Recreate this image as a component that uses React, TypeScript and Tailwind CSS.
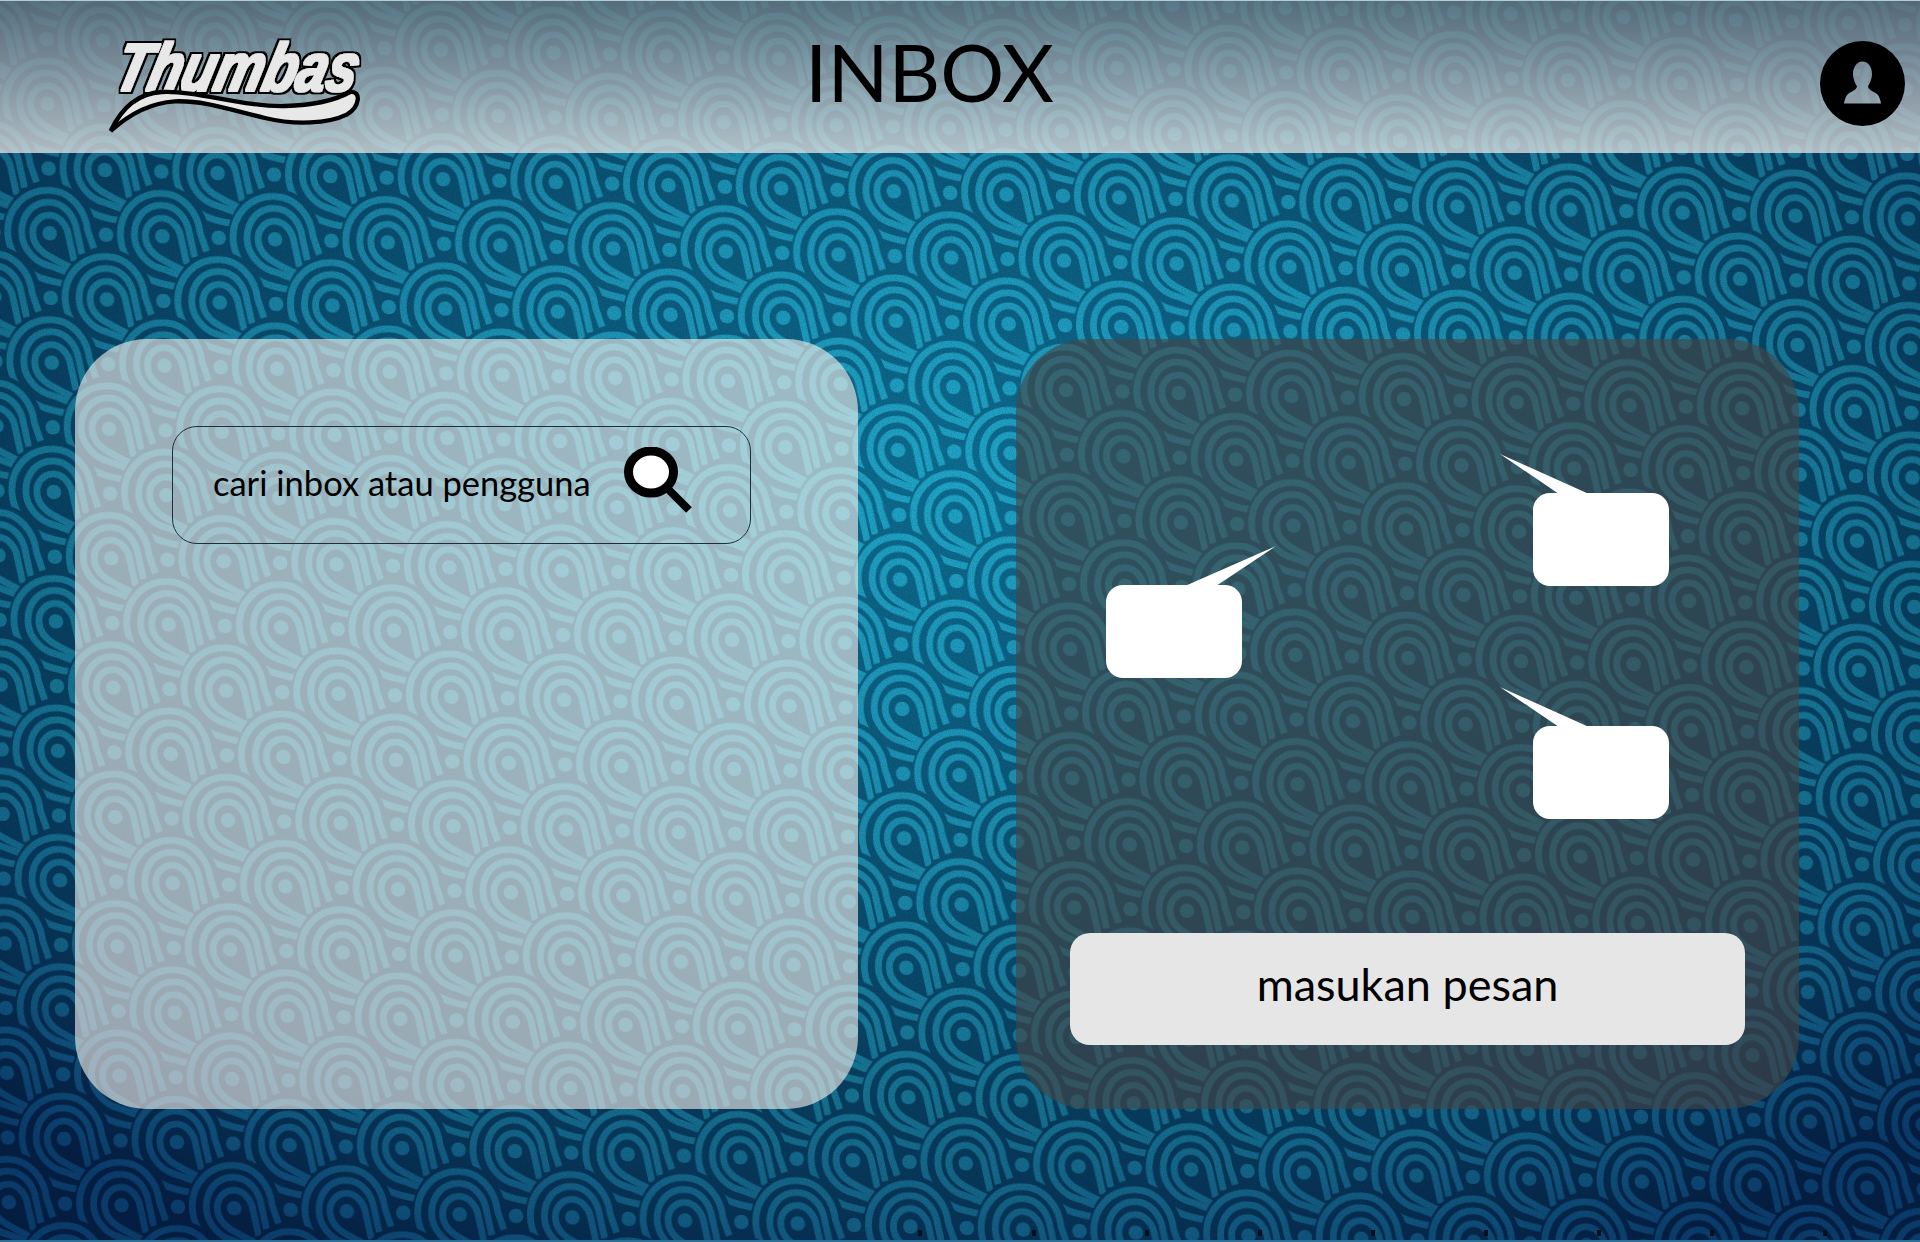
import React from "react";

const TILE_W = 112.7;
const TILE_H = 129.4;

// one scale of the wallpaper, centre dot at 0,0
const Scale = ({ x, y }: { x: number; y: number }) => (
  <g transform={`translate(${x} ${y})`}>
    <circle cx={-56.35} cy={0} r={7.3} fill="#fff" />
    <path d="M-49 12 C-49 -28 -28 -51 0 -51 C28 -51 44 -28 47 -6 L55 28 L30 60 L-20 58 Z" fill="#000" />
    <g fill="none" stroke="#fff" strokeWidth={6.8} strokeLinecap="butt">
      <path d="M12 50 C0 48 -8 46 -14 43 C-34 33 -42 14 -42 0 C-42 -24 -24 -43 0 -43 C22 -43 36 -24 38 -4 L44 14" />
      <path d="M22 40 C12 37 4 34 -6 31 C-18 26 -28 14 -28 0 C-28 -18 -16 -31 0 -31 C15 -31 25 -18 27 -4 L32 20" />
      <path d="M24 35 C16 32 8 28 -1 23 C-10 18 -17 10 -17 0 C-17 -10 -9 -18 0 -18 C9 -18 16 -10 18 -2 L24 27" />
    </g>
    <circle cx={0} cy={0} r={7.3} fill="#fff" />
  </g>
);

const Wallpaper = () => {
  const scales: { x: number; y: number }[] = [];
  for (let row = -2; row <= 4; row++) {
    for (let col = -1; col <= 2; col++) {
      scales.push({
        x: col * TILE_W + (row % 2 !== 0 ? TILE_W / 2 : 0),
        y: (row * TILE_H) / 2,
      });
    }
  }
  return (
    <svg className="absolute inset-0" width={1920} height={1242} viewBox="0 0 1920 1242">
      <defs>
        <radialGradient id="bandLight" cx="0.5" cy="0.38" r="0.72">
          <stop offset="0" stopColor="#20a8c6" />
          <stop offset="0.35" stopColor="#1d94b2" />
          <stop offset="0.7" stopColor="#16748f" />
          <stop offset="0.82" stopColor="#146585" />
          <stop offset="1" stopColor="#0b3e6a" />
        </radialGradient>
        <radialGradient id="bandDark" cx="0.5" cy="0.38" r="0.72">
          <stop offset="0" stopColor="#0e6f8f" />
          <stop offset="0.35" stopColor="#0c5a78" />
          <stop offset="0.7" stopColor="#083f5c" />
          <stop offset="0.82" stopColor="#083756" />
          <stop offset="1" stopColor="#051f3f" />
        </radialGradient>
        <pattern
          id="scales"
          patternUnits="userSpaceOnUse"
          width={TILE_W}
          height={TILE_H}
          patternTransform="matrix(1 0.027 0.016 1 47.6 103.8)"
        >
          <rect width={TILE_W} height={TILE_H} fill="#000" />
          {scales.map((s, i) => (
            <Scale key={i} x={s.x} y={s.y} />
          ))}
        </pattern>
        <mask id="scalesMask" maskUnits="userSpaceOnUse" x={0} y={0} width={1920} height={1242}>
          <rect width={1920} height={1242} fill="url(#scales)" />
        </mask>
        <filter id="grain" x="0" y="0" width="100%" height="100%">
          <feTurbulence type="fractalNoise" baseFrequency="0.8" numOctaves={2} />
          <feColorMatrix values="0 0 0 0 0  0 0 0 0 0  0 0 0 0 0.1  0 0 0 -1.4 0.9" />
        </filter>
      </defs>
      <rect width={1920} height={1242} fill="url(#bandDark)" />
      <rect width={1920} height={1242} fill="url(#bandLight)" mask="url(#scalesMask)" />
      <rect width={1920} height={1242} filter="url(#grain)" opacity={0.25} />
      {[918, 1032, 1145, 1258, 1371, 1484, 1597, 1710, 1823].map((x) => (
        <rect key={x} x={x} y={1230} width={4} height={6} fill="#04101c" />
      ))}
      <rect y={1240} width={1920} height={2} fill="#2a6f96" />
    </svg>
  );
};

const Logo = () => (
  <svg width={257} height={100} viewBox="0 0 771 300" className="mt-[18px] shrink-0 overflow-visible">
    <defs>
      {/* fattens the letters, then puts the black outline round them */}
      <filter id="logoOutline" x="-10%" y="-20%" width="120%" height="140%">
        <feMorphology in="SourceGraphic" operator="dilate" radius="3" result="fat" />
        <feMorphology in="SourceAlpha" operator="dilate" radius="10" result="outer" />
        <feFlood floodColor="#000" />
        <feComposite in2="outer" operator="in" result="outline" />
        <feMerge>
          <feMergeNode in="outline" />
          <feMergeNode in="fat" />
        </feMerge>
      </filter>
    </defs>
    <g filter="url(#logoOutline)">
      <text
        transform="translate(8 166) skewX(-14)"
        textLength={725}
        lengthAdjust="spacingAndGlyphs"
        fontFamily="'Liberation Sans', sans-serif"
        fontStyle="italic"
        fontWeight={700}
        fontSize={205}
        fill="#e8e8e8"
      >
        Thumbas
      </text>
    </g>
    <path
      d="M5 285 C35 222 80 172 158 168 C268 163 398 213 528 210 C618 208 678 193 723 168 C758 163 753 213 713 236 C658 263 558 268 468 246 C368 223 288 193 198 196 C128 200 68 228 5 285 Z"
      fill="#e8e8e8"
      stroke="#000"
      strokeWidth={13}
      strokeLinejoin="miter"
    />
  </svg>
);

const Avatar = () => (
  <svg width={85} height={85} viewBox="-42.5 -42.5 85 85" className="mt-[12px] mr-[15px] ml-auto shrink-0">
    <path
      fillRule="evenodd"
      d="M-42.5 0 A42.5 42.5 0 1 1 42.5 0 A42.5 42.5 0 1 1 -42.5 0 Z M0 -22 C-6 -22 -9.5 -16 -9.5 -9.5 C-9.5 -4 -7 0 -5.5 3 C-6 7 -12 8 -15 11 C-17 13 -18 17 -18.5 20 L18.5 20 C18 17 17 13 15 11 C12 8 6 7 5.5 3 C7 0 9.5 -4 9.5 -9.5 C9.5 -16 6 -22 0 -22 Z"
      fill="#000"
    />
  </svg>
);

const SearchIcon = () => (
  <svg width={70} height={68} viewBox="0 0 70 68" className="mb-[8px] shrink-0">
    <ellipse cx={27} cy={25} rx={22.5} ry={21} fill="#fff" stroke="#000" strokeWidth={9} />
    <path d="M43 41 L65 63" stroke="#000" strokeWidth={8} fill="none" />
  </svg>
);

const Bubble = ({ side, className }: { side: "left" | "right"; className: string }) => (
  <div className={`relative h-[93px] w-[136px] rounded-[17px] bg-white ${className}`}>
    {side === "right" ? (
      <svg width={91} height={40} viewBox="0 0 91 40" className="absolute -top-[39px] left-[79px]">
        <polygon points="0,40 91,0 31,40" fill="#fff" />
      </svg>
    ) : (
      <svg width={89} height={40} viewBox="0 0 89 40" className="absolute -top-[39px] -left-[33px]">
        <polygon points="59,40 0,0 89,40" fill="#fff" />
      </svg>
    )}
  </div>
);

export default function App() {
  return (
    <div className="relative h-[1242px] w-[1920px] overflow-hidden font-['Lato',sans-serif] text-black">
      <Wallpaper />

      <header className="relative flex h-[153px] items-center border-t border-[#b4ccd4] bg-linear-to-b from-[#6a7882]/78 to-[#dfe0e0]/78 pl-[109px]">
        <Logo />
        <h1 className="mb-[12px] ml-[439px] text-[80px] leading-none font-normal">INBOX</h1>
        <Avatar />
      </header>

      <main className="relative flex gap-[158px] pt-[186px] pl-[75px]">
        <section className="h-[770px] w-[783px] rounded-[72px] bg-[#f5f0ec]/62 pt-[87px] pl-[97px]">
          <div className="flex h-[118px] w-[579px] items-center justify-between rounded-[25px] border border-[#1d3038] pr-[56px] pl-[40px]">
            <span className="mb-[5px] text-[34.5px]">cari inbox atau pengguna</span>
            <SearchIcon />
          </div>
        </section>

        <section className="flex h-[770px] w-[783px] flex-col rounded-[72px] bg-[#454545]/62 pt-[154px]">
          <Bubble side="left" className="ml-[517px]" />
          <Bubble side="right" className="mt-[-1px] ml-[90px]" />
          <Bubble side="left" className="mt-[48px] ml-[517px]" />
          <div className="mt-[114px] ml-[54px] flex h-[112px] w-[675px] items-center justify-center rounded-[20px] bg-[#e6e6e6] pb-[8px] text-[45px]">
            masukan pesan
          </div>
        </section>
      </main>
    </div>
  );
}
